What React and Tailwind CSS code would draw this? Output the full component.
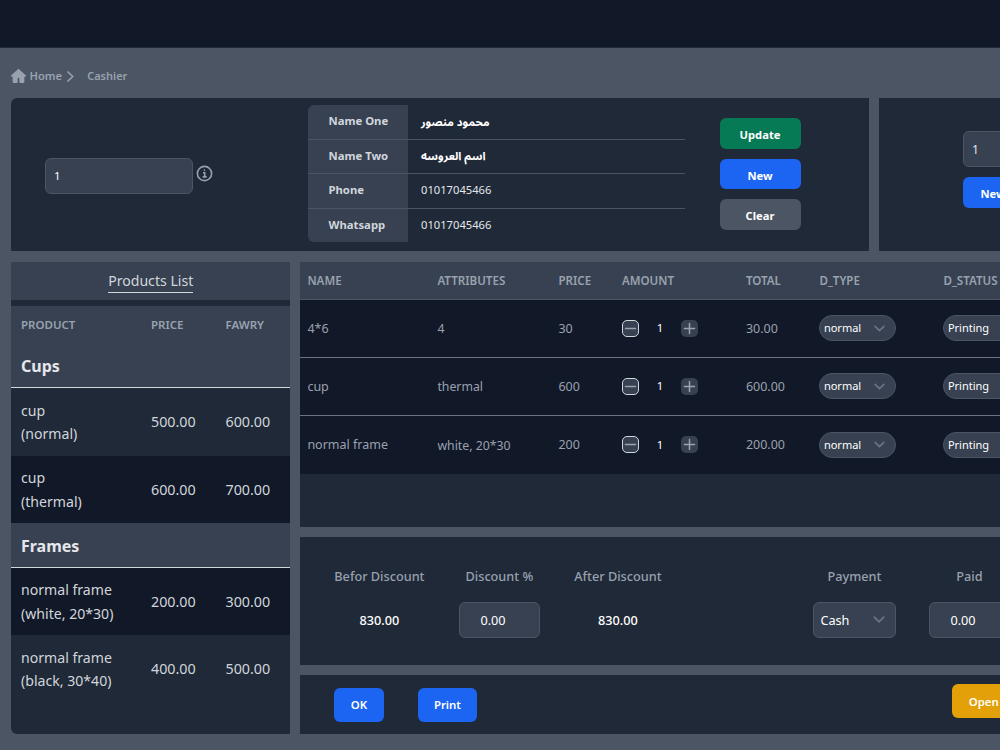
const Chevron = ({ className }) => (
  <svg className={className} viewBox="0 0 10 6" fill="none" stroke="#6b7280" strokeWidth="1.5" strokeLinecap="round" strokeLinejoin="round">
    <path d="m1 1 4 4 4-4" />
  </svg>
);

const customer = [
  ["Name One", "محمود منصور", true],
  ["Name Two", "اسم العروسه", true],
  ["Phone", "01017045466", false],
  ["Whatsapp", "01017045466", false],
];

const items = [
  ["4*6", "4", "30", "30.00"],
  ["cup", "thermal", "600", "600.00"],
  ["normal frame", "white, 20*30", "200", "200.00"],
];

const itemCols = "grid shrink-0 grid-cols-[130px_121px_63.5px_124px_73.5px_124px_100px] items-center pl-[7px]";
const productCols = "grid grid-cols-[130px_74.5px_1fr] items-center pl-[10px]";

function ProductRow({ name, variant, price, fawry, dark }) {
  return (
    <div className={`${productCols} h-[67.5px] text-[14.3px] text-gray-300 ${dark ? "bg-[#111827]" : ""}`}>
      <div className="pt-[1px] text-[14.1px] leading-[23.6px]">
        <div>{name}</div>
        <div>({variant})</div>
      </div>
      <span>{price}</span>
      <span>{fawry}</span>
    </div>
  );
}

function GroupRow({ title }) {
  return (
    <div className="flex h-[44.5px] items-center border-b border-gray-300 bg-[#374151] pl-[10px] pt-[2px] text-[16px] font-bold text-gray-200">
      <span>{title}</span>
    </div>
  );
}

function Pill({ label, className }) {
  return (
    <div className={`flex h-[26px] items-center justify-between rounded-full border border-[#4b5563] bg-[#374151] pl-[3.5px] pr-[10px] text-[11px] text-white ${className}`}>
      <span className="pt-[1px]">{label}</span>
      <Chevron className="h-[7px] w-[11px]" />
    </div>
  );
}

function Step({ plus }) {
  return (
    <div className={`flex size-[17px] items-center justify-center rounded-[5px] bg-[#374151] ${plus ? "" : "border border-gray-300"}`}>
      <svg className="size-[13px] shrink-0" viewBox="0 0 13 13" fill="none" stroke="#9ca3af" strokeWidth="1.500" strokeLinecap="round">
        <path d={plus ? "M1.5 6.5h10M6.5 1.5v10" : "M1.5 6.5h10"} />
      </svg>
    </div>
  );
}

export default function App() {
  return (
    <div className="flex h-[750px] w-[1000px] flex-col overflow-hidden bg-[#4b5563] font-['Noto_Sans','Noto_Sans_Arabic','DejaVu_Sans',sans-serif]">
      <nav className="h-12 shrink-0 border-b border-[#1f2937] bg-[#111827]" />

      <div className="flex h-[50px] shrink-0 items-center pl-[11px] pt-[7px] text-[11.2px] font-semibold text-gray-400">
        <svg className="mb-[1px] h-[14px] w-[15px]" viewBox="0 0 576 512" preserveAspectRatio="none" fill="currentColor">
          <path d="M575.8 255.5c0 18-15 32.1-32 32.1h-32l.7 160.2c0 2.700-.2 5.400-.5 8.100V472c0 22.100-17.900 40-40 40H360c-22.100 0-40-17.900-40-40V352c0-17.700-14.300-32-32-32s-32 14.300-32 32v120c0 22.100-17.900 40-40 40H104c-22.100 0-40-17.900-40-40V287.600H32c-18 0-32-14-32-32.100 0-9 3-17 10-24L266.400 8c7-7 15-8 22-8s15 2 21 7l255.400 224.500c8 7 12 15 11 24z" />
        </svg>
        <span className="ml-[3.500px]">Home</span>
        <svg className="mb-[1px] ml-[5px] h-[11px] w-[7px]" viewBox="0 0 7 11" fill="none" stroke="currentColor" strokeWidth="1.700" strokeLinecap="round" strokeLinejoin="round">
          <path d="M1 1l4.800 4.500L1 10" />
        </svg>
        <span className="ml-[13px] text-[11px]">Cashier</span>
      </div>

      <div className="flex h-[153px] shrink-0 gap-[10px] pl-[11px]">
        <section className="flex w-[858px] shrink-0 rounded-tl-md bg-[#1f2937]">
          <div className="flex w-[297px] pl-[33.500px] pt-[60px]">
            <div className="flex h-[36px] w-[148.500px] items-center rounded-md border border-[#4b5563] bg-[#374151] pl-[8.500px] text-[11.5px] text-white">1</div>
            <svg className="ml-[2.500px] mt-[6.500px] size-[17px] text-gray-400" viewBox="0 0 17 17" fill="none" stroke="currentColor" strokeWidth="1.600">
              <circle cx="8.500" cy="8.500" r="7.100" />
              <path d="M7 7.700h1.700v4M6.700 11.900h4" />
              <circle cx="8.400" cy="5.100" r=".5" fill="currentColor" strokeWidth=".9" />
            </svg>
          </div>
          <div className="mt-[7px] h-[137px] w-[377px] overflow-hidden rounded-md">
            {customer.map(([label, value, bold], i) => (
              <div key={label} className={`flex h-[34.500px] text-[11.3px] ${i < 3 ? "border-b border-[#4b5563]" : ""}`}>
                <div className="flex w-[99.500px] items-center bg-[#374151] pl-[20.500px] font-bold text-gray-300">
                  <span>{label}</span>
                </div>
                <div className={`flex items-center pl-[13.500px] ${bold ? "pt-[1px] font-bold text-white" : "text-[11.2px] text-gray-200"}`}>
                  <span>{value}</span>
                </div>
              </div>
            ))}
          </div>
          <div className="ml-[34.500px] flex w-[81px] flex-col gap-[10px] pt-[20px] text-[11.2px] font-bold text-white">
            <div className="flex h-[30.500px] items-center justify-center rounded-md bg-[#057a55] pt-[4.500px]"><span>Update</span></div>
            <div className="flex h-[30.500px] items-center justify-center rounded-md bg-[#1c64f2] pt-[4.500px]"><span>New</span></div>
            <div className="flex h-[30.500px] items-center justify-center rounded-md bg-[#4b5563] pt-[4.500px]"><span>Clear</span></div>
          </div>
        </section>
        <section className="flex w-[200px] shrink-0 flex-col gap-[10px] bg-[#1f2937] pl-[84px] pt-[33px]">
          <div className="flex h-[36px] w-[100px] items-center rounded-md border border-[#4b5563] bg-[#374151] pl-[8px] pt-[1px] text-[12px] text-gray-200">1</div>
          <div className="flex h-[30.500px] w-[100px] items-center rounded-md bg-[#1c64f2] pl-[17.500px] pt-[4.500px] text-[11.2px] font-bold text-white">New</div>
        </section>
      </div>

      <div className="mt-[10.500px] flex h-[472.500px] shrink-0 gap-[10px] pl-[11px]">
        <aside className="w-[279.400px] shrink-0 overflow-hidden rounded-bl-md bg-[#1f2937]">
          <div className="flex h-[38px] items-center justify-center bg-[#374151] text-[14.1px] text-gray-300">
            <span className="border-b border-gray-300 leading-[23px]">Products List</span>
          </div>
          <div className={`${productCols} mt-[6.500px] h-[37.500px] bg-[#374151] text-[11.500px] font-semibold text-gray-400`}>
            <span>PRODUCT</span>
            <span>PRICE</span>
            <span>FAWRY</span>
          </div>
          <GroupRow title="Cups" />
          <ProductRow name="cup" variant="normal" price="500.00" fawry="600.00" />
          <ProductRow name="cup" variant="thermal" price="600.00" fawry="700.00" dark />
          <GroupRow title="Frames" />
          <ProductRow name="normal frame" variant="white, 20*30" price="200.00" fawry="300.00" dark />
          <ProductRow name="normal frame" variant="black, 30*40" price="400.00" fawry="500.00" />
        </aside>

        <main className="flex w-[800px] shrink-0 flex-col gap-[10px]">
          <section className="h-[265.700px] shrink-0 bg-[#1f2937]">
            <div className={`${itemCols} h-[38px] border-b border-[#4b5563] bg-[#374151] pt-[1px] text-[11.6px] font-semibold text-gray-400`}>
              <span>NAME</span>
              <span>ATTRIBUTES</span>
              <span>PRICE</span>
              <span>AMOUNT</span>
              <span>TOTAL</span>
              <span>D_TYPE</span>
              <span>D_STATUS</span>
            </div>
            {items.map(([name, attributes, price, total], i) => (
              <div key={name} className={`${itemCols} h-[58.100px] bg-[#111827] text-[12.5px] text-gray-400 ${i < 2 ? "border-b border-[#6b7280]" : ""}`}>
                <span className="pt-[2px]">{name}</span>
                <span className="pt-[2px] text-[12.3px]">{attributes}</span>
                <span className="pt-[2px]">{price}</span>
                <div className="flex items-center">
                  <Step />
                  <span className="w-[42px] pt-[1px] text-center text-[11.3px] text-white">1</span>
                  <Step plus />
                </div>
                <span className="pt-[2px]">{total}</span>
                <Pill label="normal" className="w-[76.500px]" />
                <Pill label="Printing" className="w-[90px]" />
              </div>
            ))}
          </section>

          <section className="flex h-[127.400px] shrink-0 bg-[#1f2937] pl-[33px] pt-[27.500px] text-[12.700px] font-medium">
            <div className="flex w-[92px] flex-col items-center">
              <span className="leading-[22px] text-gray-400">Befor Discount</span>
              <div className="mt-[15px] flex h-[36px] items-center pt-[1.500px] text-white"><span>830.00</span></div>
            </div>
            <div className="ml-[33.500px] flex w-[81px] flex-col items-center">
              <span className="leading-[22px] text-gray-400">Discount %</span>
              <div className="mt-[15px] flex h-[36px] w-[81px] items-center rounded-md border border-[#4b5563] bg-[#374151] pl-[20.500px] pt-[1.500px] font-normal text-white">0.00</div>
            </div>
            <div className="ml-[33px] flex w-[90px] flex-col items-center">
              <span className="leading-[22px] text-gray-400">After Discount</span>
              <div className="mt-[15px] flex h-[36px] items-center pt-[1.500px] text-white"><span>830.00</span></div>
            </div>
            <div className="ml-[150px] flex w-[83px] flex-col items-center">
              <span className="leading-[22px] text-gray-400">Payment</span>
              <div className="mt-[15px] flex h-[36px] w-[83px] items-center justify-between rounded-md border border-[#4b5563] bg-[#374151] pl-[6.500px] pr-[10px] font-normal text-white">
                <span className="pt-[1.500px]">Cash</span>
                <Chevron className="h-[7px] w-[12px]" />
              </div>
            </div>
            <div className="ml-[33px] flex w-[81px] flex-col items-center">
              <span className="leading-[22px] text-gray-400">Paid</span>
              <div className="mt-[15px] flex h-[36px] w-[81px] items-center rounded-md border border-[#4b5563] bg-[#374151] pl-[20.500px] pt-[1.500px] font-normal text-white">0.00</div>
            </div>
          </section>

          <section className="flex h-[59.400px] shrink-0 bg-[#1f2937] pl-[33.500px] text-[11.4px] font-semibold text-white">
            <div className="mt-[13px] flex h-[34px] w-[50px] items-center justify-center rounded-md bg-[#1c64f2]"><span>OK</span></div>
            <div className="ml-[33.800px] mt-[13px] flex h-[34px] w-[59.500px] items-center justify-center rounded-md bg-[#1c64f2]"><span>Print</span></div>
            <div className="ml-[475px] mt-[9.500px] flex h-[34px] w-[100px] items-center rounded-md bg-[#e3a008] pl-[16.500px]"><span>Open</span></div>
          </section>
        </main>
      </div>
    </div>
  );
}
